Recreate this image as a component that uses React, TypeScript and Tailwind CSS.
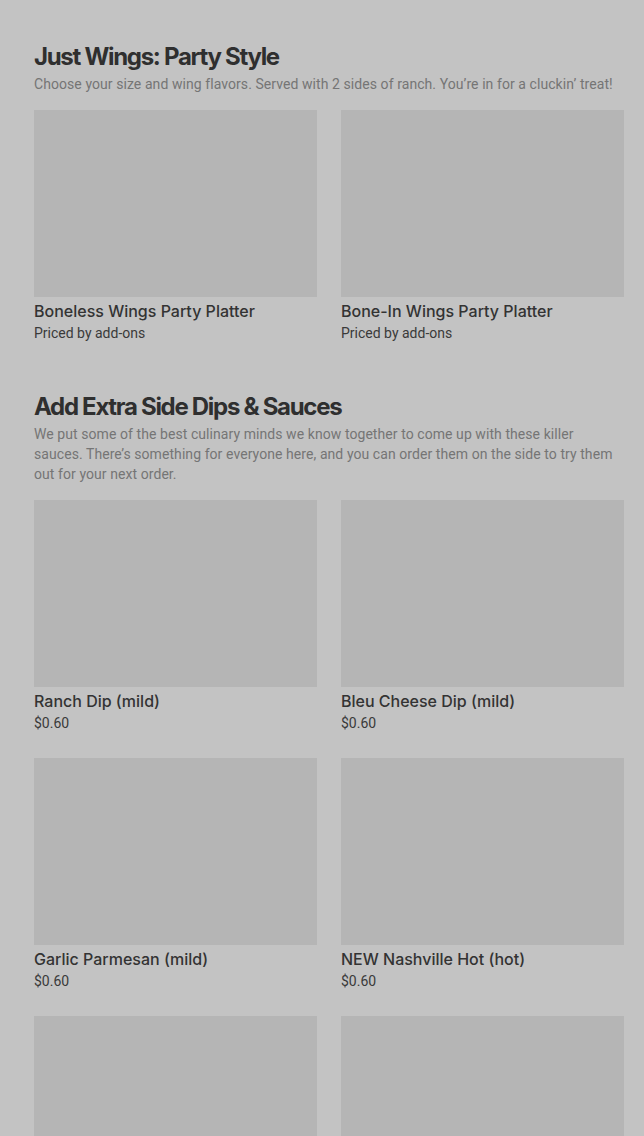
const partyItems = [
  { name: "Boneless Wings Party Platter", price: "Priced by add-ons" },
  { name: "Bone-In Wings Party Platter", price: "Priced by add-ons" },
]

const dipItems = [
  { name: "Ranch Dip (mild)", price: "$0.60" },
  { name: "Bleu Cheese Dip (mild)", price: "$0.60" },
  { name: "Garlic Parmesan (mild)", price: "$0.60" },
  { name: "NEW Nashville Hot (hot)", price: "$0.60" },
  { name: "", price: "" },
  { name: "", price: "" },
]

const ItemCard = ({ name, price }: { name: string; price: string }) => {
  return (
    <div className="flex flex-col">
      {/* Image placeholder */}
      <div className="h-[187px] w-full bg-[#b5b5b5]"></div>
      {name && (
        <>
          <div className="mt-[2px] text-[16px] leading-6 font-medium text-[#333333]">{name}</div>
          <div className="text-[14px] leading-5 text-[#3a3a3a]" style={{ fontFamily: "Roboto, sans-serif" }}>
            {price}
          </div>
        </>
      )}
    </div>
  )
}

const Section = ({
  title,
  description,
  items,
}: {
  title: string
  description: string
  items: { name: string; price: string }[]
}) => {
  return (
    <section className="flex flex-col">
      <h2 className="text-[24px] leading-8 font-bold tracking-[-1.3px] text-[#2f2f2f]">{title}</h2>
      <p
        className="mt-[1px] text-[14px] leading-5 tracking-[0.07px] text-[#757575]"
        style={{ fontFamily: "Roboto, sans-serif" }}
      >
        {description}
      </p>
      <div className="mt-4 grid grid-cols-2 gap-x-6 gap-y-[25px]">
        {items.map((item, i) => (
          <ItemCard key={i} name={item.name} price={item.price} />
        ))}
      </div>
    </section>
  )
}

export default function App() {
  return (
    <div
      className="h-[1136px] overflow-hidden bg-[#c3c3c3] pl-[34px] pr-5 pt-[41px]"
      style={{ fontFamily: "Inter, 'Noto Sans', sans-serif" }}
    >
      <div className="flex flex-col gap-[48px]">
        <Section
          title="Just Wings: Party Style"
          description="Choose your size and wing flavors. Served with 2 sides of ranch. You’re in for a cluckin’ treat!"
          items={partyItems}
        />
        <Section
          title="Add Extra Side Dips & Sauces"
          description="We put some of the best culinary minds we know together to come up with these killer sauces. There’s something for everyone here, and you can order them on the side to try them out for your next order."
          items={dipItems}
        />
      </div>
    </div>
  )
}
